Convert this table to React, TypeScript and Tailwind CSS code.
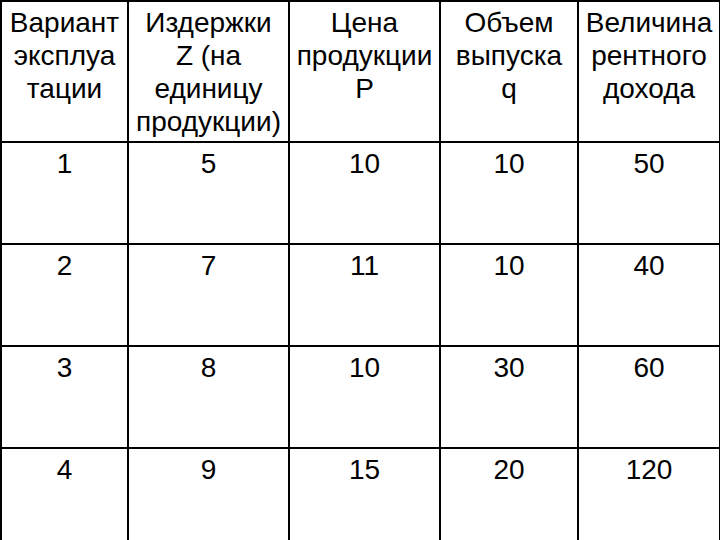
import React from "react";

const header = [
  ["Вариант", "эксплуа", "тации"],
  ["Издержки", "Z (на", "единицу", "продукции)"],
  ["Цена", "продукции", "P"],
  ["Объем", "выпуска", "q"],
  ["Величина", "рентного", "дохода"],
];

const rows = [
  ["1", "5", "10", "10", "50"],
  ["2", "7", "11", "10", "40"],
  ["3", "8", "10", "30", "60"],
  ["4", "9", "15", "20", "120"],
];

const App = () => {
  return (
    <div className="w-[720px] h-[540px] overflow-hidden bg-white">
      <table
        className="table-fixed border-collapse w-[719px] text-black text-[28px] leading-[33px]"
        style={{ fontFamily: '"Liberation Sans", Arial, sans-serif' }}
      >
        <colgroup>
          <col className="w-[127px]" />
          <col className="w-[161px]" />
          <col className="w-[151px]" />
          <col className="w-[138px]" />
          <col className="w-[142px]" />
        </colgroup>
        <thead>
          <tr className="h-[141px]">
            {header.map((lines, i) => (
              <th
                key={i}
                className="border-2 border-black align-top text-center font-normal px-0 pt-[4px]"
              >
                {lines.map((l, j) => (
                  <div key={j} className="whitespace-nowrap">
                    {l}
                  </div>
                ))}
              </th>
            ))}
          </tr>
        </thead>
        <tbody>
          {rows.map((r, i) => (
            <tr key={i} className="h-[102px]">
              {r.map((c, j) => (
                <td
                  key={j}
                  className="border-2 border-black align-top text-center pt-[4px]"
                >
                  {c}
                </td>
              ))}
            </tr>
          ))}
        </tbody>
      </table>
    </div>
  );
};

export default App;
